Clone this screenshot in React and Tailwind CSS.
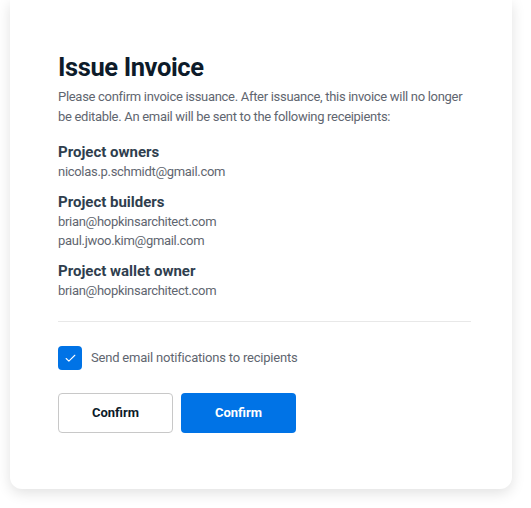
import { Check } from 'lucide-react';

const groups = [
  { title: 'Project owners', emails: ['nicolas.p.schmidt@gmail.com'] },
  {
    title: 'Project builders',
    emails: ['brian@hopkinsarchitect.com', 'paul.jwoo.kim@gmail.com'],
  },
  { title: 'Project wallet owner', emails: ['brian@hopkinsarchitect.com'] },
];

export default function App() {
  return (
    <div
      className="min-h-[508px] w-[531px] bg-white pl-[10px]"
      style={{ fontFamily: 'Roboto, "Liberation Sans", sans-serif' }}
    >
      <div className="w-[502px] rounded-b-xl bg-white px-12 pt-[51px] pb-[56px] shadow-[0_4px_14px_rgba(0,0,0,0.12)]">
        <h1 className="text-[25.5px] leading-[32px] font-bold tracking-[-0.4px] text-[#0d1b2a]">
          Issue Invoice
        </h1>
        <p className="mt-[4px] text-[13px] leading-[19.5px] tracking-[-0.3px] text-[#5f6670]">
          Please confirm invoice issuance. After issuance, this invoice will no
          longer be editable. An email will be sent to the following
          receipients:
        </p>

        <div className="mt-[16px] flex flex-col gap-[10px]">
          {groups.map((g) => (
            <div key={g.title}>
              <h2 className="text-[15px] leading-[20px] font-bold text-[#2f3e4e]">
                {g.title}
              </h2>
              {g.emails.map((e, i) => (
                <p
                  key={i}
                  className="text-[13px] leading-[19.5px] tracking-[-0.3px] text-[#5f6670]"
                >
                  {e}
                </p>
              ))}
            </div>
          ))}
        </div>

        <div className="mt-[21px] h-px w-[413px] bg-[#e8e8e8]" />

        <label className="mt-[24px] flex items-center gap-[9px]">
          <span className="flex h-[24px] w-[24px] items-center justify-center rounded-[4px] bg-[#0073e6]">
            <Check className="h-[13px] w-[13px] text-white" strokeWidth={2} />
          </span>
          <span className="text-[13px] tracking-[-0.2px] text-[#5f6670]">
            Send email notifications to recipients
          </span>
        </label>

        <div className="mt-[23px] flex gap-2">
          <button className="h-[40px] w-[115px] rounded-[4px] border border-[#c8c8c8] bg-white text-[13px] font-bold text-[#0d1b2a]">
            Confirm
          </button>
          <button className="h-[40px] w-[115px] rounded-[4px] bg-[#0073e6] text-[13px] font-bold text-white">
            Confirm
          </button>
        </div>
      </div>
    </div>
  );
}
